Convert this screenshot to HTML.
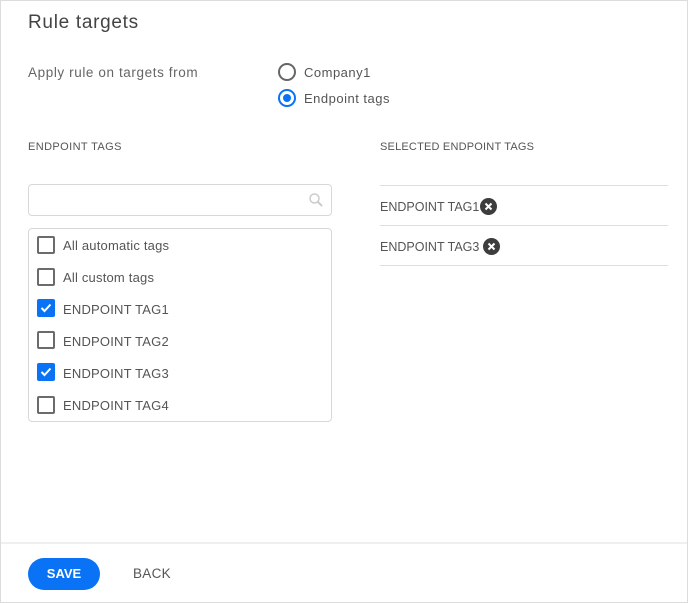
<!DOCTYPE html>
<html><head><meta charset="utf-8"><style>
*{box-sizing:border-box;margin:0;padding:0}
body{width:688px;height:603px;background:#fff;font-family:"Liberation Sans",sans-serif;color:#555;position:relative;overflow:hidden}
.frame{position:absolute;left:0;top:0;width:688px;height:603px;border:1px solid #dcdcdc}
.a{position:absolute;white-space:nowrap}
.cb{position:absolute;left:37px;width:18px;height:18px;border:2px solid #6b6b6b;border-radius:2px}
.cb.on{background:#0a73f5;border-color:#0a73f5}
.lbl{position:absolute;left:63px;font-size:13px;color:#555;letter-spacing:0.2px}
.hl{position:absolute;left:380px;width:288px;height:1px;background:#ddd}
.x{display:inline-block;width:17px;height:17px;border-radius:50%;background:#3d3d3d;vertical-align:-4px;margin-left:1px;position:relative}
</style></head><body>
<div class="frame"></div>
<div class="a" style="left:28px;top:12px;font-size:19px;color:#444;letter-spacing:0.7px">Rule targets</div>
<div class="a" style="left:28px;top:65px;font-size:13.5px;color:#666;letter-spacing:0.6px">Apply rule on targets from</div>
<div class="a" style="left:278px;top:63px;width:18px;height:18px;border:2px solid #666;border-radius:50%"></div>
<div class="a" style="left:304px;top:65px;font-size:13px;color:#555;letter-spacing:0.5px">Company1</div>
<div class="a" style="left:278px;top:89px;width:18px;height:18px;border:2px solid #0a73f5;border-radius:50%"><div style="position:absolute;left:3px;top:3px;width:8px;height:8px;border-radius:50%;background:#0a73f5"></div></div>
<div class="a" style="left:304px;top:91px;font-size:13px;color:#555;letter-spacing:0.5px">Endpoint tags</div>
<div class="a" style="left:28px;top:141px;font-size:11px;color:#555;letter-spacing:0.4px">ENDPOINT TAGS</div>
<div class="a" style="left:380px;top:141px;font-size:11px;color:#555;letter-spacing:0.2px">SELECTED ENDPOINT TAGS</div>
<div class="a" style="left:28px;top:184px;width:304px;height:32px;border:1px solid #d8d8d8;border-radius:4px"></div>
<svg class="a" style="left:308px;top:192px" width="16" height="16" viewBox="0 0 16 16"><circle cx="6.5" cy="6.5" r="4.5" fill="none" stroke="#ccc" stroke-width="1.5"/><path d="M10 10l4 4" stroke="#ccc" stroke-width="2"/></svg>
<div class="a" style="left:28px;top:228px;width:304px;height:194px;border:1px solid #d8d8d8;border-radius:4px"></div>
<div class="cb" style="top:236px"></div><div class="lbl" style="top:238px">All automatic tags</div>
<div class="cb" style="top:268px"></div><div class="lbl" style="top:270px">All custom tags</div>
<div class="cb on" style="top:299px"><svg width="14" height="14" viewBox="0 0 14 14" style="position:absolute;left:0;top:0"><path d="M2.5 7l3 3 6-6.5" fill="none" stroke="#fff" stroke-width="2"/></svg></div><div class="lbl" style="top:302px">ENDPOINT TAG1</div>
<div class="cb" style="top:331px"></div><div class="lbl" style="top:334px">ENDPOINT TAG2</div>
<div class="cb on" style="top:363px"><svg width="14" height="14" viewBox="0 0 14 14" style="position:absolute;left:0;top:0"><path d="M2.5 7l3 3 6-6.5" fill="none" stroke="#fff" stroke-width="2"/></svg></div><div class="lbl" style="top:366px">ENDPOINT TAG3</div>
<div class="cb" style="top:396px"></div><div class="lbl" style="top:398px">ENDPOINT TAG4</div>
<div class="hl" style="top:185px"></div>
<div class="a" style="left:380px;top:198px;font-size:12.5px;color:#555">ENDPOINT TAG1<span class="x"><svg width="17" height="17" viewBox="0 0 17 17" style="position:absolute;left:0;top:0"><path d="M5.5 5.5l6 6M11.5 5.5l-6 6" stroke="#fff" stroke-width="2"/></svg></span></div>
<div class="hl" style="top:225px"></div>
<div class="a" style="left:380px;top:238px;font-size:12.5px;color:#555">ENDPOINT TAG3<span class="x" style="margin-left:4px"><svg width="17" height="17" viewBox="0 0 17 17" style="position:absolute;left:0;top:0"><path d="M5.5 5.5l6 6M11.5 5.5l-6 6" stroke="#fff" stroke-width="2"/></svg></span></div>
<div class="hl" style="top:265px"></div>
<div class="a" style="left:1px;top:542px;width:686px;height:2px;background:#efefef"></div>
<div class="a" style="left:28px;top:558px;width:72px;height:32px;border-radius:16px;background:#0a73f5;color:#fff;font-size:13px;font-weight:bold;text-align:center;line-height:32px">SAVE</div>
<div class="a" style="left:133px;top:566px;font-size:13.5px;color:#555;letter-spacing:0.3px">BACK</div>
</body></html>
